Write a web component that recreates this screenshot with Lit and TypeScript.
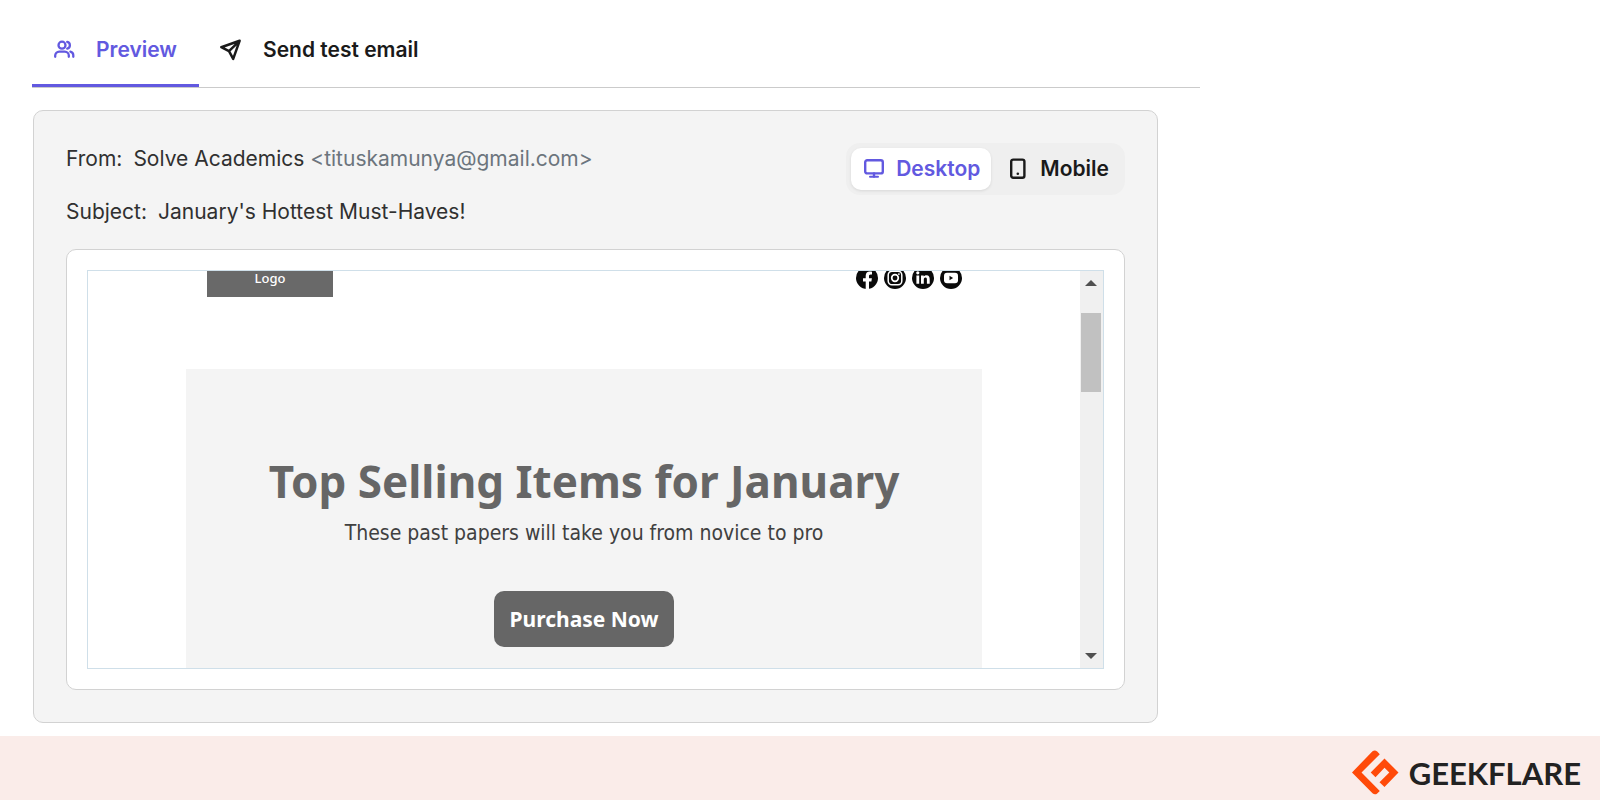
import { LitElement, html, css, svg } from "lit";
import { customElement, state } from "lit/decorators.js";

const usersIcon = svg`<svg viewBox="0 0 24 24" width="24" height="24" fill="none" stroke="currentColor" stroke-width="2.300" stroke-linecap="round" aria-hidden="true">
  <circle cx="10" cy="7.200" r="3.500"/>
  <path d="M3.200 18.800v-1.200a4 4 0 0 1 4-4h5.600a4 4 0 0 1 4 4v1.200"/>
  <path d="M15.200 3.800a3.500 3.500 0 0 1 0 6.800M18.400 13.600a3.800 3.800 0 0 1 2.900 3.800v1.400"/>
</svg>`;
const sendIcon = svg`<svg viewBox="0 0 24 24" width="24" height="24" fill="none" stroke="currentColor" stroke-width="2.500" stroke-linejoin="round" stroke-linecap="round" aria-hidden="true">
  <path d="M20.600 2.800L2.300 9.200L10 13.200L14.200 20.900Z M10 13.200L20.600 2.800"/>
</svg>`;
const desktopIcon = svg`<svg viewBox="0 0 24 24" width="24" height="24" fill="none" stroke="currentColor" stroke-width="2.400" stroke-linejoin="round" stroke-linecap="round" aria-hidden="true">
  <rect x="3.200" y="3.200" width="17.600" height="13.200" rx="2"/><path d="M12 16.500v3"/><path d="M8 19.700h8" stroke-width="2"/>
</svg>`;
const mobileIcon = svg`<svg viewBox="0 0 24 24" width="24" height="24" fill="none" stroke="currentColor" stroke-width="2.400" aria-hidden="true">
  <rect x="5.200" y="2.600" width="13.200" height="18.200" rx="2"/><circle cx="11.800" cy="16.800" r="1.300" fill="currentColor" stroke="none"/>
</svg>`;
const facebookIcon = svg`<svg viewBox="0 0 22 22" width="22" height="22" aria-hidden="true"><circle cx="11" cy="11" r="11" fill="#0a0a0a"/><path fill="#fff" d="M9.700 22v-7.600H7v-3.200h2.700V8.800c0-2.700 1.600-4.200 4-4.200 1.200 0 2.300.2 2.300.2v2.700h-1.300c-1.300 0-1.700.8-1.700 1.600v2.100h2.900l-.5 3.200h-2.400V22z"/></svg>`;
const instagramIcon = svg`<svg viewBox="0 0 22 22" width="22" height="22" fill="none" stroke="#fff" aria-hidden="true"><circle cx="11" cy="11" r="11" fill="#0a0a0a" stroke="none"/><rect x="4.200" y="4.200" width="13.600" height="13.600" rx="3.800" stroke-width="1.500"/><circle cx="11" cy="11" r="3.300" stroke-width="1.700"/><circle cx="14.900" cy="7.100" r=".9" fill="#fff" stroke="none"/></svg>`;
const linkedinIcon = svg`<svg viewBox="0 0 22 22" width="22" height="22" aria-hidden="true"><circle cx="11" cy="11" r="11" fill="#0a0a0a"/><g fill="#fff"><circle cx="5.800" cy="5.800" r="1.600"/><path d="M4.400 8.400h2.800v8.400H4.400zM9 8.400h2.700v1.200c.5-.8 1.500-1.400 2.700-1.400 2.700 0 3.300 1.700 3.300 4v4.600h-2.800v-4.100c0-1.100 0-2.200-1.400-2.200s-1.700 1.100-1.700 2.200v4.100H9z"/></g></svg>`;
const youtubeIcon = svg`<svg viewBox="0 0 22 22" width="22" height="22" aria-hidden="true"><circle cx="11" cy="11" r="11" fill="#0a0a0a"/><rect x="4" y="5.700" width="14" height="10.600" rx="3" fill="#fff"/><path d="M9.500 8.800v4.400l3.600-2.200z" fill="#0a0a0a"/></svg>`;
const geekflareMark = svg`<svg viewBox="0 0 48 46" width="48" height="46" aria-hidden="true">
  <path fill="#ff4a09" d="M21.500 1.200q2.500-1.600 4.700.4l2.600 2.600L10.500 22.500l18.300 18.500-2.600 2.400q-2.300 2-4.700-.2L1 22.500z"/>
  <path fill="#ff4a09" d="M33.500 8.500L47.500 22.500 33.500 37 28.500 32.200 38.300 22.500 33.500 17.800 24.500 27.300 19.700 22.500z"/>
</svg>`;

@customElement("app-root")
export class AppRoot extends LitElement {
  @state() private tab = "preview";
  @state() private device = "desktop";

  static styles = css`
    :host { display: flex; flex-direction: column; min-height: 100vh; background: #fff; color: #1a1a1a; font-family: Inter, sans-serif; }
    * { box-sizing: border-box; }
    svg { display: block; flex: none; }
    button { font: inherit; color: inherit; border: 0; background: none; cursor: pointer; margin: 0; }
    .page { flex: 1; width: 75%; padding: 16px 0 13px 32px; }
    .tabs { display: flex; border-bottom: 1px solid #cbcbcb; }
    .tab { display: flex; align-items: center; gap: 20px; height: 71px; padding: 0 22px 0 20px; border-bottom: 3px solid transparent; font-size: 21px; line-height: 28px; font-weight: 600; }
    .tab.active { color: #6259e0; border-bottom-color: #6259e0; }
    .card { margin: 22px 42px 0 1px; padding: 32px; border: 1px solid #d2d2d2; border-radius: 10px; background: #f4f4f4; }
    .top { display: flex; justify-content: space-between; align-items: flex-start; margin-bottom: 21px; }
    .meta { margin: 0; display: grid; gap: 21px; font-size: 21px; line-height: 32px; color: #303030; }
    .row { display: flex; gap: 11px; }
    .row dd { margin: 0; }
    .mail { color: #6c757d; }
    .switch { display: flex; padding: 5px; gap: 4px; border-radius: 14px; background: #efefef; }
    .device { display: flex; align-items: center; gap: 10px; height: 42px; padding: 0 11px; border-radius: 10px; font-size: 21px; line-height: 28px; font-weight: 600; }
    .device.active { color: #6259e0; background: #fff; box-shadow: 0 1px 3px #0000001a; }
    .canvas { padding: 20px; border: 1px solid #d2d2d2; border-radius: 10px; background: #fff; }
    .frame { display: flex; overflow: hidden; border: 1px solid #cfdfe9; }
    .email { flex: 1; padding: 0 98px; font-family: "Noto Sans", sans-serif; }
    .head { display: flex; justify-content: space-between; align-items: center; margin: -12px 0 72px; padding: 0 20px 0 21px; }
    .logo { width: 126px; background: #696969; color: #fff; text-align: center; font-size: 13px; line-height: 38px; font-weight: 500; }
    .social { display: flex; gap: 6px; }
    .hero { display: flex; flex-direction: column; align-items: center; padding: 83px 20px 21px; background: #f4f4f4; text-align: center; }
    h1 { margin: 0; font-size: 44px; line-height: 58px; font-weight: 700; color: #666; }
    .lead { margin: 8px 0 43px; font-family: "DejaVu Sans Condensed", "Noto Sans", sans-serif; font-size: 21px; line-height: 30px; color: #404040; }
    .buy { height: 56px; padding: 0 15px; border-radius: 10px; background: #666; color: #fff; font-size: 21px; line-height: 28px; font-weight: 700; }
    .bar { width: 23px; padding: 9px 2px 9px 1px; display: flex; flex-direction: column; background: #f0f0f0; }
    .arrow { align-self: center; border: 6px solid transparent; border-top-width: 0; border-bottom-color: #505050; }
    .thumb { height: 79px; margin: 27px 0 auto; background: #c1c1c1; }
    .arrow.down { border-width: 6px 6px 0; border-color: #505050 transparent; }
    footer { display: flex; justify-content: flex-end; align-items: center; gap: 10px; height: 64px; padding: 10px 19px 0 0; background: #faece9; color: #222; font-family: Lato, sans-serif; font-size: 31px; line-height: 40px; font-weight: 700; }
  `;

  render() {
    const tabs = [["preview", "Preview", usersIcon], ["send", "Send test email", sendIcon]] as const;
    const devices = [["desktop", "Desktop", desktopIcon], ["mobile", "Mobile", mobileIcon]] as const;
    const social = [["Facebook", facebookIcon], ["Instagram", instagramIcon], ["LinkedIn", linkedinIcon], ["YouTube", youtubeIcon]] as const;
    return html`
      <main class="page">
        <nav class="tabs" role="tablist">
          ${tabs.map(([id, label, icon]) => html`<button class="tab ${this.tab === id ? "active" : ""}" role="tab" aria-selected=${this.tab === id} @click=${() => (this.tab = id)}>${icon}<span>${label}</span></button>`)}
        </nav>
        <section class="card">
          <div class="top">
            <dl class="meta">
              <div class="row"><dt>From:</dt><dd>Solve Academics <span class="mail">&lt;tituskamunya@gmail.com&gt;</span></dd></div>
              <div class="row"><dt>Subject:</dt><dd>January's Hottest Must-Haves!</dd></div>
            </dl>
            <div class="switch">
              ${devices.map(([id, label, icon]) => html`<button class="device ${this.device === id ? "active" : ""}" aria-pressed=${this.device === id} @click=${() => (this.device = id)}>${icon}<span>${label}</span></button>`)}
            </div>
          </div>
          <div class="canvas">
            <div class="frame">
              <article class="email">
                <div class="head">
                  <div class="logo">Logo</div>
                  <div class="social">${social.map(([name, icon]) => html`<a href="#" aria-label=${name}>${icon}</a>`)}</div>
                </div>
                <div class="hero">
                  <h1>Top Selling Items for January</h1>
                  <p class="lead">These past papers will take you from novice to pro</p>
                  <button class="buy">Purchase Now</button>
                </div>
              </article>
              <div class="bar" aria-hidden="true"><i class="arrow"></i><i class="thumb"></i><i class="arrow down"></i></div>
            </div>
          </div>
        </section>
      </main>
      <footer>${geekflareMark}<span>GEEKFLARE</span></footer>
    `;
  }
}
